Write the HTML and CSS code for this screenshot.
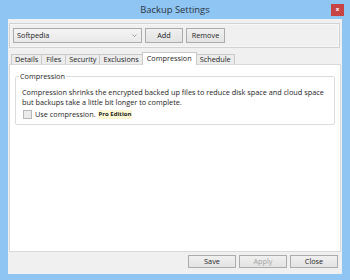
FILE: index.html
```html
<!DOCTYPE html>
<html>
<head>
<meta charset="utf-8">
<title>Backup Settings</title>
<link rel="stylesheet" href="styles.css">
</head>
<body>
<div class="window">
	<div class="titlebar">
		<span></span>
		<span class="title">Backup Settings</span>
		<span class="close">x</span>
	</div>
	<div class="client">
		<div class="topbox">
			<div class="select">
				<span>Softpedia</span>
				<svg width="5" height="3" viewBox="0 0 5 3"><path d="M0.5 0.5 L2.5 2.5 L4.5 0.5" fill="none" stroke="#8a8a8a" stroke-width="0.8"/></svg>
			</div>
			<button class="btn btn-add">Add</button>
			<button class="btn btn-remove">Remove</button>
		</div>

		<div class="tabs">
			<span class="tab">Details</span>
			<span class="tab tab-files">Files</span>
			<span class="tab">Security</span>
			<span class="tab">Exclusions</span>
			<span class="tab active">Compression</span>
			<span class="tab">Schedule</span>
		</div>

		<div class="panel">
			<fieldset class="group">
				<legend>Compression</legend>
				<p>Compression shrinks the encrypted backed up files to reduce disk space and cloud space<br>but backups take a little bit longer to complete.</p>
				<label class="check"><span class="box"></span>Use compression. <span class="pro">Pro Edition</span></label>
			</fieldset>
		</div>

		<div class="footer">
			<button class="btn btn-foot">Save</button>
			<button class="btn btn-foot disabled">Apply</button>
			<button class="btn btn-foot">Close</button>
		</div>
	</div>
</div>
</body>
</html>
```

FILE: styles.css
```css
body{margin: 0; overflow: hidden;}
.window{
	width: 350px;
	height: 280px;
	background-color: #8fc5f3;
	font-family: "Open Sans", "Liberation Sans", sans-serif;
	font-size: 7.3px;
	color: #1e1e1e;
	display: flex;
	flex-direction: column;
}

/* title bar */
.titlebar{
	height: 19px;
	display: grid;
	grid-template-columns: 1fr auto 1fr;
	align-items: center;
}
.title{
	font-size: 9.4px;
	color: #2b3440;
	line-height: 19px;
}
.close{
	justify-self: end;
	margin-right: 6px;
	width: 13px;
	height: 12px;
	background-color: #c84343;
	color: #fff;
	font-size: 6px;
	line-height: 11px;
	text-align: center;
	font-weight: bold;
}

/* client area */
.client{
	flex: 1;
	margin: 0 8px 6px 8px;
	background-color: #f0f0f0;
	padding: 4px 1px 6px 1px;
	display: flex;
	flex-direction: column;
}
.topbox{
	height: 15px;
	margin-right: 1px;
	border: 1px solid #d2d2d2;
	box-shadow: inset 0 0 0 1px #f7f7f7;
	padding: 4px 3px;
	display: flex;
	gap: 3px;
}
.select{
	border: 1px solid #acacac;
	background: linear-gradient(#f4f4f4, #e9e9e9);
	display: flex;
	align-items: center;
	justify-content: space-between;
	padding: 0 4px 0 3px;
	box-sizing: border-box;
	width: 129px;
	height: 15px;
	line-height: 13px;
}
.btn{
	font-family: inherit;
	font-size: 7.3px;
	color: #1e1e1e;
	border: 1px solid #acacac;
	background: linear-gradient(#f0f0f0, #e3e3e3);
	padding: 0;
	margin: 0;
	height: 15px;
	line-height: 13px;
}
.btn-add{width: 38px;}
.btn-remove{width: 39px;}

/* tabs */
.tabs{
	height: 12px;
	margin-top: 4px;
	padding-left: 2px;
	display: flex;
	align-items: flex-end;
}
.tab{
	height: 10px;
	line-height: 9px;
	padding: 0 3px;
	border: 1px solid #c9c9c9;
	border-bottom: none;
	background-color: #ececec;
	box-sizing: border-box;
	margin-left: -1px;
}
.tab:first-child{margin-left: 0;}
.tab-files{padding: 0 4px;}
.tab.active{
	height: 13px;
	margin-bottom: -1px;
	background-color: #fff;
	line-height: 11px;
	position: relative;
	padding: 0 4px;
}

.panel{
	flex: 1;
	background-color: #fff;
	border: 1px solid #d9d9d9;
}
.group{
	margin: 6px 5px 0 5px;
	border: 1px solid #dcdcdc;
	border-radius: 2px;
	padding: 0 4px 5px 3px;
	min-width: 0;
}
.group legend{
	padding: 0 1px;
	line-height: 10px;
}
.group p{
	margin: 6px 0 0 3px;
	line-height: 10px;
	white-space: nowrap;
}
.check{
	display: flex;
	align-items: center;
	margin: 2px 0 0 4px;
	height: 10px;
}
.box{
	width: 9px;
	height: 9px;
	box-sizing: border-box;
	border: 1px solid #b8b8b8;
	background-color: #ebebeb;
	margin-right: 3px;
}
.pro{
	font-weight: bold;
	font-size: 6px;
	background-color: #fbf8d3;
	padding: 0 1px;
	margin-left: 2px;
	line-height: 9px;
}

/* footer buttons */
.footer{
	margin-top: 3px;
	margin-right: 3px;
	display: flex;
	justify-content: flex-end;
	gap: 3px;
}
.btn-foot{
	width: 48px;
	height: 13px;
	line-height: 11px;
}
.disabled{color: #a3a3a3;}
```
